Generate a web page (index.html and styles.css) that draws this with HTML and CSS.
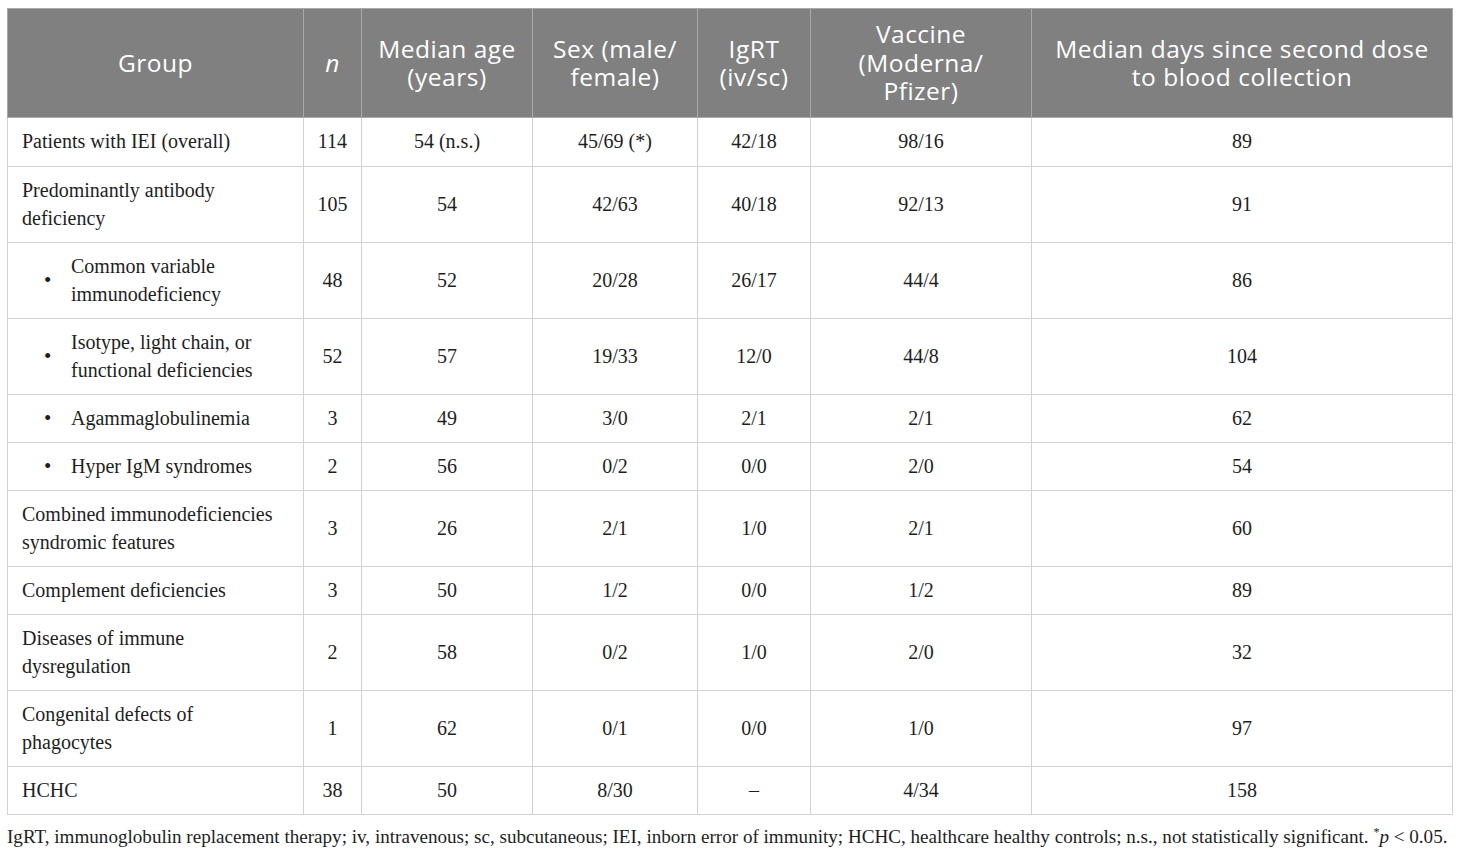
FILE: index.html
```html
<!DOCTYPE html>
<html lang="en">
<head>
<meta charset="utf-8">
<title>Table</title>
<link rel="stylesheet" href="styles.css">
</head>
<body>
<div class="page">
  <table class="data">
    <colgroup>
      <col class="c1"><col class="c2"><col class="c3"><col class="c4"><col class="c5"><col class="c6"><col class="c7">
    </colgroup>
    <thead>
      <tr>
        <th>Group</th>
        <th><em>n</em></th>
        <th>Median age<br>(years)</th>
        <th>Sex (male/<br>female)</th>
        <th>IgRT<br>(iv/sc)</th>
        <th>Vaccine<br>(Moderna/<br>Pfizer)</th>
        <th>Median days since second dose<br>to blood collection</th>
      </tr>
    </thead>
    <tbody>
      <tr class="first"><td class="lbl">Patients with IEI (overall)</td><td>114</td><td>54 (n.s.)</td><td>45/69 (*)</td><td>42/18</td><td>98/16</td><td>89</td></tr>
      <tr><td class="lbl">Predominantly antibody<br>deficiency</td><td>105</td><td>54</td><td>42/63</td><td>40/18</td><td>92/13</td><td>91</td></tr>
      <tr><td class="lbl"><div class="sub"><span class="dot">•</span><span>Common variable<br>immunodeficiency</span></div></td><td>48</td><td>52</td><td>20/28</td><td>26/17</td><td>44/4</td><td>86</td></tr>
      <tr><td class="lbl"><div class="sub"><span class="dot">•</span><span>Isotype, light chain, or<br>functional deficiencies</span></div></td><td>52</td><td>57</td><td>19/33</td><td>12/0</td><td>44/8</td><td>104</td></tr>
      <tr><td class="lbl"><div class="sub"><span class="dot">•</span><span>Agammaglobulinemia</span></div></td><td>3</td><td>49</td><td>3/0</td><td>2/1</td><td>2/1</td><td>62</td></tr>
      <tr><td class="lbl"><div class="sub"><span class="dot">•</span><span>Hyper IgM syndromes</span></div></td><td>2</td><td>56</td><td>0/2</td><td>0/0</td><td>2/0</td><td>54</td></tr>
      <tr><td class="lbl">Combined immunodeficiencies<br>syndromic features</td><td>3</td><td>26</td><td>2/1</td><td>1/0</td><td>2/1</td><td>60</td></tr>
      <tr><td class="lbl">Complement deficiencies</td><td>3</td><td>50</td><td>1/2</td><td>0/0</td><td>1/2</td><td>89</td></tr>
      <tr><td class="lbl">Diseases of immune<br>dysregulation</td><td>2</td><td>58</td><td>0/2</td><td>1/0</td><td>2/0</td><td>32</td></tr>
      <tr><td class="lbl">Congenital defects of<br>phagocytes</td><td>1</td><td>62</td><td>0/1</td><td>0/0</td><td>1/0</td><td>97</td></tr>
      <tr><td class="lbl">HCHC</td><td>38</td><td>50</td><td>8/30</td><td>–</td><td>4/34</td><td>158</td></tr>
    </tbody>
  </table>
  <p class="note">IgRT, immunoglobulin replacement therapy; iv, intravenous; sc, subcutaneous; IEI, inborn error of immunity; HCHC, healthcare healthy controls; n.s., not statistically significant. <sup>*</sup><em>p</em> &lt; 0.05.</p>
</div>
</body>
</html>
```

FILE: styles.css
```css
html, body {
  margin: 0;
  padding: 0;
  background: #ffffff;
}

.page {
  padding: 8px 8px 0 7px;
}

.data {
  width: 1445px;
  border-collapse: collapse;
  table-layout: fixed;
}

.c1 { width: 296px; }
.c2 { width: 58px; }
.c3 { width: 171px; }
.c4 { width: 165px; }
.c5 { width: 113px; }
.c6 { width: 221px; }
.c7 { width: 421px; }

.data th {
  background: #808080;
  color: #ffffff;
  font-family: "Open Sans", "Noto Sans", sans-serif;
  font-weight: 400;
  font-size: 24.5px;
  letter-spacing: 0.5px;
  line-height: 28.5px;
  padding: 0 4px;
  text-align: center;
  vertical-align: middle;
  border: 1px solid #a9a9a9;
  height: 108px;
}

.data td {
  font-family: "Liberation Serif", "Times New Roman", serif;
  font-size: 20px;
  line-height: 28px;
  color: #1e1e1e;
  text-align: center;
  vertical-align: middle;
  padding: 9px 8px 10px;
  border: 1px solid #d2d2d2;
}

.data tr.first td {
  padding-bottom: 11px;
}

.data td.lbl {
  text-align: left;
  padding-left: 14px;
}

.sub {
  display: flex;
  align-items: center;
}

.dot {
  flex: 0 0 49px;
  box-sizing: border-box;
  padding-left: 22px;
  font-size: 21px;
}

.note {
  margin: 10px 0 0;
  font-family: "Liberation Serif", "Times New Roman", serif;
  font-size: 19.1px;
  line-height: 24px;
  color: #1e1e1e;
  white-space: nowrap;
}

.note sup {
  font-size: 12px;
  vertical-align: 7px;
  line-height: 0;
}
```
